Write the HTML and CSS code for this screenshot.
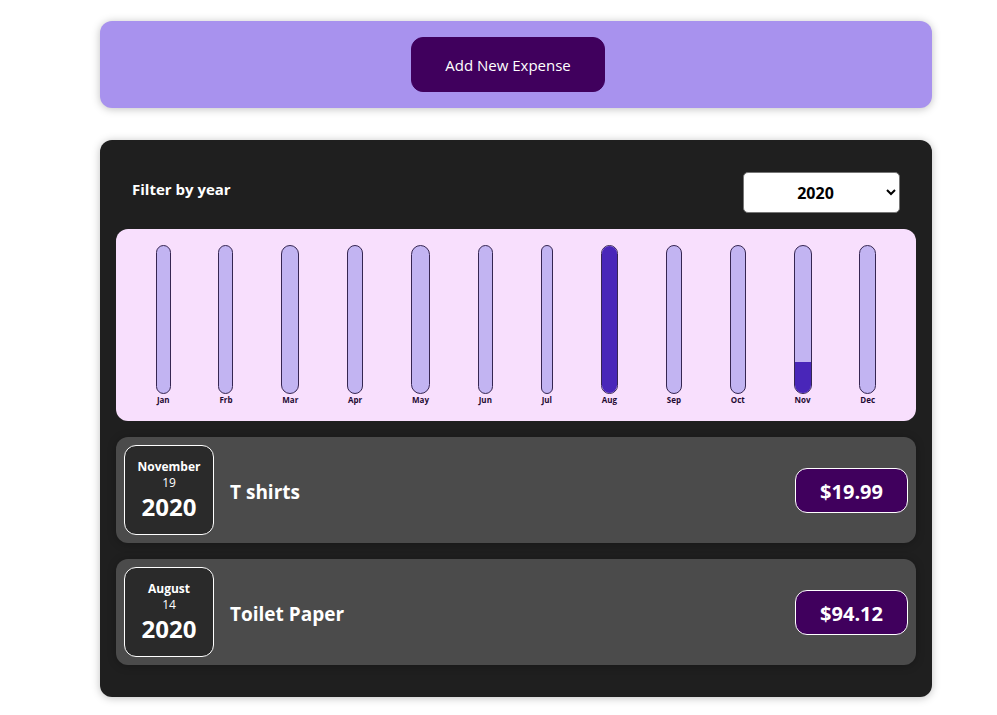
FILE: index.html
```html
<!DOCTYPE html>
<html lang="en">
<head>
  <meta charset="utf-8">
  <meta name="viewport" content="width=device-width, initial-scale=1">
  <title>Expenses</title>
  <link rel="stylesheet" href="styles.css">
</head>
<body>
  <section class="new-expense">
    <button type="button" class="new-expense__button">Add New Expense</button>
  </section>

  <main class="expenses">
    <div class="filter">
      <label class="filter__label" for="year">Filter by year</label>
      <select class="filter__select" id="year">
        <option>2022</option>
        <option>2021</option>
        <option selected>2020</option>
        <option>2019</option>
      </select>
    </div>

    <div class="chart">
      <div class="chart__column"><div class="chart__bar"></div><div class="chart__label">Jan</div></div>
      <div class="chart__column"><div class="chart__bar"></div><div class="chart__label">Frb</div></div>
      <div class="chart__column"><div class="chart__bar"></div><div class="chart__label">Mar</div></div>
      <div class="chart__column"><div class="chart__bar"></div><div class="chart__label">Apr</div></div>
      <div class="chart__column"><div class="chart__bar"></div><div class="chart__label">May</div></div>
      <div class="chart__column"><div class="chart__bar"></div><div class="chart__label">Jun</div></div>
      <div class="chart__column"><div class="chart__bar"></div><div class="chart__label">Jul</div></div>
      <div class="chart__column"><div class="chart__bar"><div class="chart__fill" style="height: 100%"></div></div><div class="chart__label">Aug</div></div>
      <div class="chart__column"><div class="chart__bar"></div><div class="chart__label">Sep</div></div>
      <div class="chart__column"><div class="chart__bar"></div><div class="chart__label">Oct</div></div>
      <div class="chart__column"><div class="chart__bar"><div class="chart__fill" style="height: 21%"></div></div><div class="chart__label">Nov</div></div>
      <div class="chart__column"><div class="chart__bar"></div><div class="chart__label">Dec</div></div>
    </div>

    <ul class="list">
      <li class="item">
        <div class="date">
          <div class="date__month">November</div>
          <div class="date__day">19</div>
          <div class="date__year">2020</div>
        </div>
        <h2 class="item__title">T shirts</h2>
        <div class="item__price">$19.99</div>
      </li>
      <li class="item">
        <div class="date">
          <div class="date__month">August</div>
          <div class="date__day">14</div>
          <div class="date__year">2020</div>
        </div>
        <h2 class="item__title">Toilet Paper</h2>
        <div class="item__price">$94.12</div>
      </li>
    </ul>
  </main>
</body>
</html>
```
FILE: styles.css
```css
* {
  box-sizing: border-box;
}

body {
  margin: 0;
  padding: 21px 65px 16px 100px;
  background: #fff;
  font-family: "Open Sans", "Noto Sans", sans-serif;
}

.new-expense {
  display: flex;
  justify-content: center;
  padding: 16px;
  margin-bottom: 32px;
  border-radius: 12px;
  background: #a892ee;
  box-shadow: 0 1px 8px rgba(0, 0, 0, 0.25);
}

.new-expense__button {
  padding: 18px 33px 16px;
  margin-right: 16px;
  border: 1px solid #40005d;
  border-radius: 12px;
  background: #40005d;
  color: #fff;
  font-family: inherit;
  font-size: 15px;
  line-height: 19px;
}

.expenses {
  padding: 16px;
  border-radius: 12px;
  background: #1f1f1f;
  box-shadow: 0 1px 8px rgba(0, 0, 0, 0.25);
}

.filter {
  display: flex;
  justify-content: space-between;
  padding: 16px;
}

.filter__label {
  color: #fff;
  font-size: 15px;
  font-weight: 700;
  line-height: 34px;
}

.filter__select {
  width: 157px;
  height: 41px;
  padding: 8px;
  border: 1px solid #767676;
  border-radius: 5px;
  background: #fff;
  color: #000;
  font-family: inherit;
  font-size: 16px;
  font-weight: 700;
  text-align: center;
}

.chart {
  display: flex;
  justify-content: space-around;
  height: 192px;
  padding: 16px;
  border-radius: 12px;
  background: #f8dffd;
}

.chart__column {
  display: flex;
  flex-direction: column;
}

.chart__bar {
  display: flex;
  flex: none;
  flex-direction: column;
  justify-content: flex-end;
  height: 149px;
  border: 1px solid #362652;
  border-radius: 12px;
  background: #c2b4f2;
  overflow: hidden;
}

.chart__fill {
  background: #4926b9;
}

.chart__label {
  padding: 0 1px;
  color: #1f0a33;
  font-size: 8px;
  font-weight: 700;
  line-height: 12px;
  text-align: center;
}

.list {
  display: flex;
  flex-direction: column;
  gap: 16px;
  margin: 16px 0;
  padding: 0;
  list-style: none;
}

.item {
  display: flex;
  align-items: center;
  gap: 16px;
  padding: 8px;
  border-radius: 12px;
  background: #4b4b4b;
  box-shadow: 0 1px 8px rgba(0, 0, 0, 0.25);
}

.date {
  display: flex;
  flex-direction: column;
  align-items: center;
  justify-content: center;
  width: 90px;
  height: 90px;
  padding-top: 2px;
  border: 1px solid #fff;
  border-radius: 12px;
  background: #2a2a2a;
  color: #fff;
  font-size: 12px;
  line-height: 16px;
}

.date__month {
  font-weight: 700;
}

.date__year {
  font-size: 24px;
  font-weight: 700;
  line-height: 32px;
}

.item__title {
  flex: 1;
  margin: 0;
  padding-top: 4px;
  color: #fff;
  font-size: 19px;
  font-weight: 700;
  line-height: 27px;
}

.item__price {
  padding: 9px 24px 7px;
  border: 1px solid #fff;
  border-radius: 12px;
  background: #40005d;
  color: #fff;
  font-size: 20px;
  font-weight: 700;
  line-height: 27px;
}
```
